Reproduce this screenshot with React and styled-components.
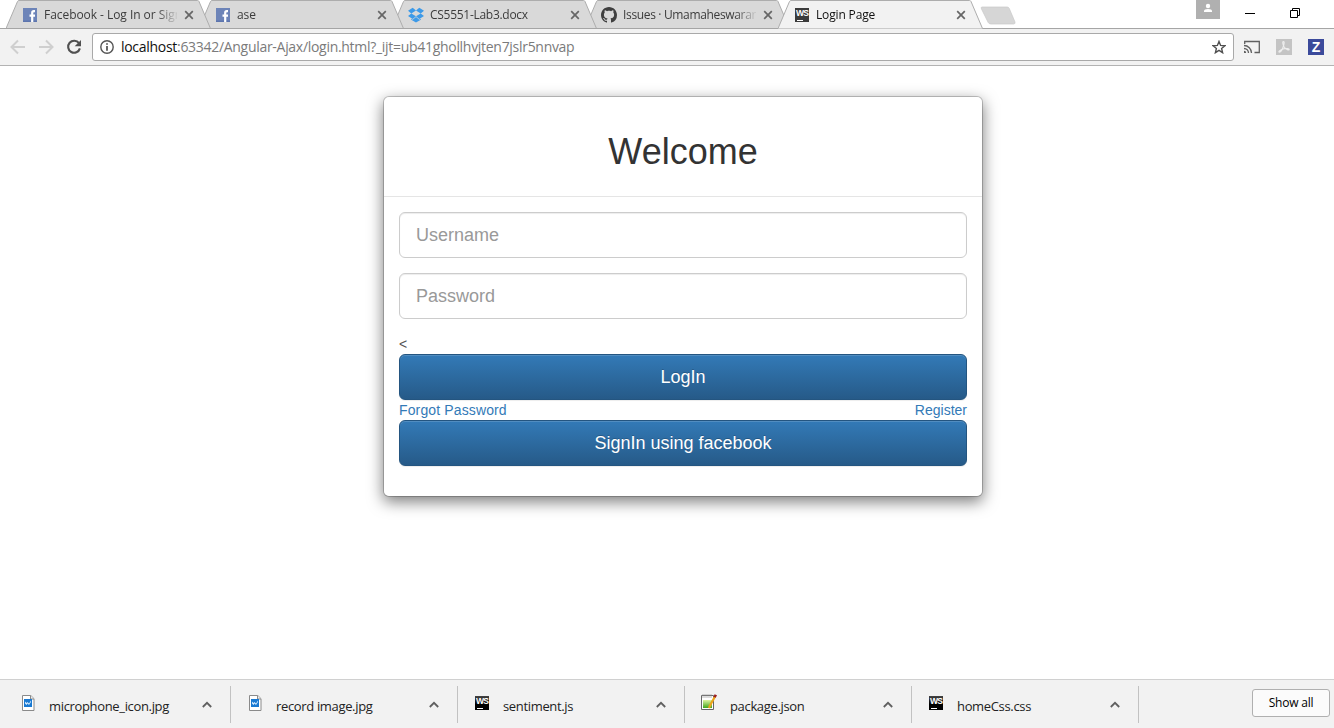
import React from "react";
import styled, { createGlobalStyle } from "styled-components";

const uiFont = `"Open Sans", "Noto Sans", sans-serif`;
const pageFont = `"Liberation Sans", Arial, sans-serif`;

const GlobalStyle = createGlobalStyle`
  *, *::before, *::after { box-sizing: border-box; }
  body { margin: 0; background: #fff; }
  svg { display: block; flex: none; }
`;

const Browser = styled.div`
  display: flex;
  flex-direction: column;
  width: 100%;
  height: 100vh;
  overflow: hidden;
  font-family: ${uiFont};
`;

/* ---------- tab strip ---------- */

const TabStrip = styled.header`
  display: flex;
  align-items: flex-start;
  height: 28px;
  padding-left: 6px;
  background: #fff;
`;

const TabBox = styled.div`
  position: relative;
  z-index: ${(p) => p.$layer};
  display: flex;
  align-items: center;
  flex: none;
  width: 205px;
  height: 29px;
  margin-right: -12px;
  padding: 1px 0 0 16px;
`;

const TabShape = styled.svg`
  position: absolute;
  inset: 0;
`;

const TabIcon = styled.span`
  position: relative;
  display: flex;
  align-items: center;
  justify-content: center;
  width: 16px;
  height: 16px;
`;

const TabTitle = styled.span`
  position: relative;
  width: 133px;
  margin-left: 6px;
  overflow: hidden;
  white-space: nowrap;
  font-size: 12px;
  line-height: 18px;
  letter-spacing: ${(p) => p.$spacing}px;
  color: ${(p) => (p.$active ? "#111" : "#3c3c3c")};
  mask-image: linear-gradient(to right, #000 112px, transparent 135px);
`;

const CloseIcon = styled.svg`
  position: relative;
  margin-left: 7px;
`;

const NewTab = styled.svg`
  margin: 6px 0 0 9px;
`;

const WindowControls = styled.div`
  display: flex;
  align-items: flex-start;
  margin-left: auto;
  margin-right: 33px;
`;

const Avatar = styled.div`
  display: flex;
  justify-content: center;
  width: 24px;
  height: 19px;
  padding-top: 3px;
  margin-right: 25px;
  background: #b0b0b0;
`;

const MinimizeMark = styled.span`
  width: 10px;
  height: 1px;
  margin: 13px 35px 0 0;
  background: #000;
`;

const RestoreIcon = styled.svg`
  margin-top: 8px;
`;

/* ---------- toolbar ---------- */

const Toolbar = styled.nav`
  display: flex;
  align-items: center;
  flex: none;
  height: 38px;
  padding: 0 10px;
  background: #f2f2f2;
  border-top: 1px solid #a5a5a5;
  border-bottom: 1px solid #b3b3b3;
`;

const NavIcons = styled.div`
  display: flex;
  align-items: center;
  gap: 12px;
  width: 82px;
`;

const AddressBar = styled.div`
  display: flex;
  align-items: center;
  width: 1142px;
  height: 28px;
  padding: 0 7px;
  background: #fff;
  border: 1px solid #a9a9a9;
  border-radius: 3px;
`;

const Url = styled.span`
  flex: 1;
  margin-left: 7px;
  font-size: 14px;
  line-height: 20px;
  letter-spacing: -0.295px;
  color: #7b7b7b;
  white-space: nowrap;
`;

const Host = styled.span`
  color: #111;
`;

const Extensions = styled.div`
  display: flex;
  gap: 16px;
  margin-left: 10px;
`;

const ZBadge = styled.span`
  display: flex;
  align-items: center;
  justify-content: center;
  width: 16px;
  height: 16px;
  background: #3b4a9b;
  color: #fff;
  font: 700 14px/16px ${pageFont};
`;

const WsBadge = styled.span`
  display: flex;
  flex-direction: column;
  justify-content: space-between;
  width: 14px;
  height: 14px;
  padding: 2px 1px 1px;
  background: ${(p) => (p.$dark ? "linear-gradient(#444, #000 60%)" : "#3b3b3b")};
  color: #fff;
  font: 700 8.5px/7px ${pageFont};
  letter-spacing: -0.7px;

  &::after {
    content: "";
    width: 6px;
    height: 1px;
    margin-left: 1px;
    background: #fff;
  }
`;

/* ---------- page ---------- */

const Page = styled.main`
  flex: 1;
  display: flex;
  justify-content: center;
  align-items: flex-start;
  padding: 30px 0 0 32px;
  font-family: ${pageFont};
  font-size: 14px;
  line-height: 20px;
  color: #333;
`;

const Dialog = styled.section`
  width: 600px;
  background: #fff;
  background-clip: padding-box;
  border: 1px solid rgba(0, 0, 0, 0.2);
  border-radius: 6px;
  box-shadow: 0 5px 15px rgba(0, 0, 0, 0.5);
`;

const DialogHeader = styled.div`
  height: 100px;
  padding: 35px 15px 0;
  border-bottom: 1px solid #e5e5e5;
`;

const Title = styled.h1`
  margin: 0;
  font-size: 36px;
  font-weight: 400;
  line-height: 39.6px;
  text-align: center;
`;

const Form = styled.form`
  display: flex;
  flex-direction: column;
  padding: 15px 15px 30px;
`;

const Field = styled.input`
  width: 100%;
  height: 46px;
  margin: 0 0 15px;
  padding: 10px 16px;
  background: #fff;
  border: 1px solid #ccc;
  border-radius: 6px;
  box-shadow: inset 0 1px 1px rgba(0, 0, 0, 0.075);
  font: 18px/24px ${pageFont};
  color: #555;

  &::placeholder { color: #999; opacity: 1; }
`;

const StrayMark = styled.span`
  height: 20px;
  color: #555;
`;

const SubmitButton = styled.button`
  height: 46px;
  padding: 0 16px;
  border: 1px solid #245580;
  border-radius: 6px;
  background: linear-gradient(to bottom, #337ab7 0%, #265a88 100%);
  box-shadow: inset 0 1px 0 rgba(255, 255, 255, 0.15), 0 1px 1px rgba(0, 0, 0, 0.075);
  color: #fff;
  font: 18px/24px ${pageFont};
  text-shadow: 0 -1px 0 rgba(0, 0, 0, 0.2);
`;

const Links = styled.div`
  display: flex;
  justify-content: space-between;
  height: 20px;
`;

const TextLink = styled.a`
  color: #337ab7;
  text-decoration: none;
  letter-spacing: ${(p) => p.$spacing || 0}px;
`;

/* ---------- downloads ---------- */

const DownloadBar = styled.footer`
  display: flex;
  flex: none;
  height: 49px;
  padding: 6px 4px 5px;
  background: #f2f2f2;
  border-top: 1px solid #d0d0d0;
`;

const Download = styled.div`
  display: flex;
  width: 227px;
  height: 37px;
  padding: 0 18px;
  border-right: 1px solid #c2c2c2;
`;

const FileIcon = styled.span`
  display: flex;
  align-items: flex-start;
  width: ${(p) => 27 + p.$outset}px;
  margin-left: -${(p) => p.$outset}px;
  padding-top: ${(p) => p.$top}px;
`;

const FileName = styled.span`
  flex: 1;
  padding-top: 10px;
  font-size: 13px;
  line-height: 20px;
  letter-spacing: -0.34px;
  color: #222;
  white-space: nowrap;
`;

const Chevron = styled.svg`
  margin-top: 15px;
`;

const ShowAll = styled.button`
  width: 78px;
  height: 28px;
  margin: 3px 0 0 auto;
  padding: 0;
  border: 1px solid #b0b0b0;
  border-radius: 3px;
  background: #fbfbfb;
  color: #000;
  font: 500 12px/18px ${uiFont};
  letter-spacing: -0.2px;
`;

/* ---------- icons ---------- */

const Facebook = () => (
  <svg width="14" height="14" viewBox="0 0 14 14">
    <rect width="14" height="14" fill="#6d84b8" />
    <rect y="12.5" width="14" height="1.5" fill="#5d75ae" />
    <path d="M12 3.2h-1.2c-1.1 0-1.6.6-1.6 1.7V14M6.5 7.6H12" fill="none" stroke="#fff" strokeWidth="2.2" />
  </svg>
);

const Dropbox = () => (
  <svg width="16" height="16" viewBox="0 0 16 16" fill="#3d9ae8">
    <path d="M4.7.8 8 3.5 3.3 6.4 0 3.8zM11.3.8 16 3.8l-3.3 2.6L8 3.5zM0 9l3.3-2.6L8 9.3l-3.3 2.8zM16 9l-3.3-2.6L8 9.3l3.3 2.8zM8 9.900l3.300 2.800 1.500-1v1L8 15.600l-4.800-2.900v-1l1.500 1z" />
  </svg>
);

const Github = () => (
  <svg width="16" height="16" viewBox="0 0 16 16" fill="#3f3f3f">
    <path d="M8 0C3.58 0 0 3.58 0 8c0 3.54 2.29 6.53 5.47 7.59.4.07.55-.17.55-.38 0-.19-.01-.82-.01-1.49-2.01.37-2.53-.49-2.69-.94-.09-.23-.48-.94-.82-1.13-.28-.15-.68-.52-.01-.53.63-.01 1.08.58 1.23.82.72 1.21 1.87.87 2.33.66.07-.52.28-.87.51-1.07-1.78-.2-3.64-.89-3.64-3.95 0-.87.31-1.59.82-2.15-.08-.2-.36-1.02.08-2.12 0 0 .67-.21 2.2.82.64-.18 1.32-.27 2-.27.68 0 1.36.09 2 .27 1.53-1.04 2.2-.82 2.2-.82.44 1.1.16 1.92.08 2.12.51.56.82 1.27.82 2.15 0 3.07-1.87 3.75-3.65 3.95.29.25.54.73.54 1.48 0 1.07-.01 1.93-.01 2.2 0 .21.15.46.55.38A8.01 8.01 0 0 0 16 8c0-4.42-3.58-8-8-8z" />
  </svg>
);

const Arrow = ({ flip }) => (
  <svg width="16" height="16" viewBox="0 0 16 16" fill="none" stroke="#cfcfcf" strokeWidth="2">
    <path d={flip ? "M1 8h13M8 1.5 14.5 8 8 14.5" : "M15 8H2M8 1.5 1.5 8 8 14.5"} />
  </svg>
);

const Reload = () => (
  <svg width="16" height="16" viewBox="0 0 16 16">
    <path d="M13 4.2A6 6 0 1 0 13.9 9.4" fill="none" stroke="#505050" strokeWidth="2.1" />
    <path d="M15 1v6.3H8.7z" fill="#505050" />
  </svg>
);

const Info = () => (
  <svg width="14" height="14" viewBox="0 0 14 14">
    <circle cx="7" cy="7" r="6.2" fill="none" stroke="#555" strokeWidth="1.4" />
    <path d="M6.2 3.2h1.6v1.6H6.2zM6.2 6h1.6v4.8H6.2z" fill="#444" />
  </svg>
);

const Star = () => (
  <svg width="14" height="14" viewBox="0 0 14 14">
    <path d="m7 1.400 1.600 4 4.300.3-3.300 2.800 1 4.200L7 10.400l-3.600 2.300 1-4.200L1.100 5.700l4.300-.3z" fill="none" stroke="#505050" strokeWidth="1.400" />
  </svg>
);

const Cast = () => (
  <svg width="16" height="16" viewBox="0 0 16 16" fill="none" stroke="#606060" strokeWidth="1.300">
    <path d="M.7 5V2.500h14.600v11H10.500M0 9.500A4.500 4.500 0 0 1 4.500 14M0 6.500A7.500 7.500 0 0 1 7.500 14" />
    <path d="M0 11.800A2.200 2.200 0 0 1 2.200 14H0z" fill="#606060" stroke="none" />
  </svg>
);

const Pdf = () => (
  <svg width="16" height="16" viewBox="0 0 16 16">
    <rect width="16" height="16" fill="#c4c4c4" />
    <path d="M7.300 2.500c1.300 0 .9 2 .3 4C6.900 9 5 13 3.300 13.200c-1.500-.2 1-2.700 4.700-3.400 2.700-.5 5.200-.2 5.200.7 0 1.200-3.200.2-5-2.500C7 6 6.200 2.700 7.300 2.500z" fill="none" stroke="#eee" strokeWidth="1.100" />
  </svg>
);

const ImageFile = () => (
  <svg width="13" height="16" viewBox="0 0 13 16">
    <path d="M.5.500h8.300l3.200 3.200v11.800H.5z" fill="#fff" stroke="#8a8a8a" />
    <path d="M8.500.500v3.500H12" fill="#eee" stroke="#8a8a8a" />
    <rect x="2" y="4" width="8" height="8" fill="#1979d2" />
    <path d="M3 6.500 4.500 8 5.500 7l1.500 1.500L9 5.500V7L7 10 5.500 8.500 4.500 10 3 8.500z" fill="#d7ecff" />
  </svg>
);

const NoteFile = () => (
  <svg width="16" height="17" viewBox="0 0 16 17">
    <defs>
      <linearGradient id="leaf" x1="0" y1="0" x2="0" y2="1">
        <stop offset="0" stopColor="#dff3a0" />
        <stop offset="1" stopColor="#3fa51c" />
      </linearGradient>
    </defs>
    <path d="M.5 1.500h12v14H.5z" fill="#fff" stroke="#666" />
    <path d="M2 0v4M4 0v4M6 0v4M8 0v4M10 0v4" stroke="#999" strokeWidth=".7" />
    <path d="M2 6h9v8H2z" fill="url(#leaf)" />
    <path d="m14 2.500-5 9-1 2.500" fill="none" stroke="#eda51c" strokeWidth="2.200" />
    <path d="m13.600 3.300 1.200-2.500" stroke="#9c2020" strokeWidth="2.600" />
  </svg>
);

const Ws = ({ dark }) => <WsBadge $dark={dark}>WS</WsBadge>;

const tabs = [
  { title: "Facebook - Log In or Sign", icon: <Facebook />, spacing: -0.05 },
  { title: "ase", icon: <Facebook />, spacing: -0.1 },
  { title: "CS5551-Lab3.docx", icon: <Dropbox />, spacing: -0.28 },
  { title: "Issues · Umamaheswarare", icon: <Github />, spacing: -0.34 },
  { title: "Login Page", icon: <Ws />, spacing: -0.15, active: true },
];

const downloads = [
  { name: "microphone_icon.jpg", icon: <ImageFile />, top: 9, outset: 0 },
  { name: "record image.jpg", icon: <ImageFile />, top: 9, outset: 0 },
  { name: "sentiment.js", icon: <Ws dark />, top: 10, outset: 1 },
  { name: "package.json", icon: <NoteFile />, top: 8, outset: 2 },
  { name: "homeCss.css", icon: <Ws dark />, top: 10, outset: 1 },
];

function Tab({ tab, layer }) {
  return (
    <TabBox $layer={layer}>
      <TabShape width="205" height="29" viewBox="0 0 205 29">
        <path
          d="M0 28.500 11.500 1.500Q12 .500 13 .500H191.500Q192.500 .500 193 1.500L204.500 28.500"
          fill={tab.active ? "#f2f2f2" : "#d9d9d9"}
          stroke="#adadad"
        />
        {!tab.active && <path d="M0 28.500H205" stroke="#a5a5a5" />}
      </TabShape>
      <TabIcon>{tab.icon}</TabIcon>
      <TabTitle $active={tab.active} $spacing={tab.spacing}>{tab.title}</TabTitle>
      <CloseIcon width="10" height="10" viewBox="0 0 10 10">
        <path d="m1.200 1.200 7.600 7.600m0-7.600L1.200 8.800" stroke="#666" strokeWidth="1.700" />
      </CloseIcon>
    </TabBox>
  );
}

export default function App() {
  return (
    <Browser>
      <GlobalStyle />
      <TabStrip>
        {tabs.map((tab, i) => (
          <Tab key={tab.title} tab={tab} layer={tab.active ? 9 : 5 - i} />
        ))}
        <NewTab width="36" height="19" viewBox="0 0 36 19">
          <path d="M2 1h25q1.500 0 2.200 1.300L35 16q.5 2-1.500 2H11q-2 0-2.800-1.500L1.500 3Q.5 1 2 1z" fill="#d6d6d6" stroke="#c8c8c8" strokeWidth=".7" />
        </NewTab>
        <WindowControls>
          <Avatar>
            <svg width="10" height="10" viewBox="0 0 10 10" fill="#fff">
              <circle cx="5" cy="3" r="2.200" />
              <path d="M1 9V8q0-2 4-2t4 2v1z" />
            </svg>
          </Avatar>
          <MinimizeMark />
          <RestoreIcon width="11" height="11" viewBox="0 0 11 11" fill="none" stroke="#000">
            <path d="M.5 2.500h7v7h-7zM2.500 2.500v-2h7v7H7.500" />
          </RestoreIcon>
        </WindowControls>
      </TabStrip>

      <Toolbar>
        <NavIcons>
          <Arrow />
          <Arrow flip />
          <Reload />
        </NavIcons>
        <AddressBar>
          <Info />
          <Url><Host>localhost</Host>:63342/Angular-Ajax/login.html?_ijt=ub41ghollhvjten7jslr5nnvap</Url>
          <Star />
        </AddressBar>
        <Extensions>
          <Cast />
          <Pdf />
          <ZBadge>Z</ZBadge>
        </Extensions>
      </Toolbar>

      <Page>
        <Dialog>
          <DialogHeader>
            <Title>Welcome</Title>
          </DialogHeader>
          <Form onSubmit={(e) => e.preventDefault()}>
            <Field type="text" placeholder="Username" />
            <Field type="password" placeholder="Password" />
            <StrayMark>&lt;</StrayMark>
            <SubmitButton>LogIn</SubmitButton>
            <Links>
              <TextLink href="#" $spacing={0.13}>Forgot Password</TextLink>
              <TextLink href="#">Register</TextLink>
            </Links>
            <SubmitButton type="button">SignIn using facebook</SubmitButton>
          </Form>
        </Dialog>
      </Page>

      <DownloadBar>
        {downloads.map((file) => (
          <Download key={file.name}>
            <FileIcon $top={file.top} $outset={file.outset}>{file.icon}</FileIcon>
            <FileName>{file.name}</FileName>
            <Chevron width="10" height="7" viewBox="0 0 10 7">
              <path d="M.8 6 5 1.800 9.200 6" fill="none" stroke="#606060" strokeWidth="1.800" />
            </Chevron>
          </Download>
        ))}
        <ShowAll>Show all</ShowAll>
      </DownloadBar>
    </Browser>
  );
}
